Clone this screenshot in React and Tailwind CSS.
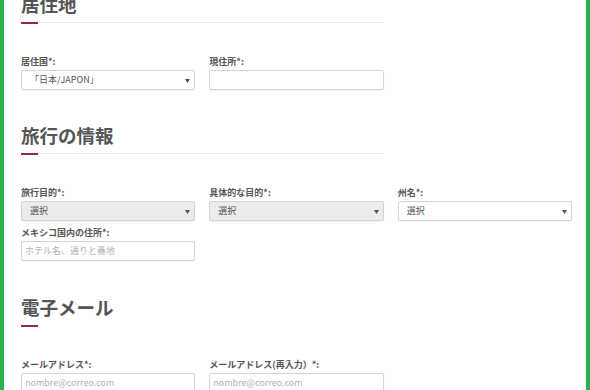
import React from "react";

const font = { fontFamily: '"Noto Sans CJK JP", "Noto Sans", sans-serif' };

function Arrow() {
  return (
    <svg width="5" height="4" viewBox="0 0 5 4" className="absolute right-[4px] top-[8px]">
      <path d="M0 0 L5 0 L2.5 4 Z" fill="#555" />
    </svg>
  );
}

function Label({ children }) {
  return (
    <div className="h-[12px] text-[9px] leading-[12px] font-bold text-[#555] mb-[2px] whitespace-nowrap">
      {children}
    </div>
  );
}

function Select({ value, disabled }) {
  return (
    <div
      className={
        "relative h-[20px] rounded-[2px] border border-[#d4d4d4] shadow-[0_1px_1px_rgba(0,0,0,0.05)] pl-[8px] text-[9px] leading-[18px] text-[#555] " +
        (disabled ? "bg-[#ececec]" : "bg-white")
      }
    >
      {value}
      <Arrow />
    </div>
  );
}

function Input({ placeholder }) {
  return (
    <div className="h-[20px] rounded-[2px] border border-[#d4d4d4] shadow-[0_1px_1px_rgba(0,0,0,0.05)] bg-white pl-[3px] text-[9px] leading-[18px] text-[#b0b0b0]">
      {placeholder}
    </div>
  );
}

function Heading({ title, rule = true }) {
  return (
    <div>
      <h2 className="h-[24px] text-[18.5px] leading-[24px] font-bold text-[#545454]">{title}</h2>
      <div className="relative mt-[6px] h-[2px] w-[363px]">
        {rule && <div className="h-px bg-[#e6e6e6]" />}
        <div className="absolute left-0 top-0 h-[2px] w-[17px] bg-[#9d2449]" />
      </div>
    </div>
  );
}

export default function App() {
  return (
    <div className="w-[590px] h-[390px] overflow-hidden bg-white flex" style={font}>
      <div className="w-[4px] bg-[#2bb24c]" />
      <div className="flex-1 pl-[17px] -mt-[8px]">
        {/* 居住地 */}
        <Heading title="居住地" />
        <div className="grid grid-cols-3 gap-x-[14px] w-[551px] mt-[32px]">
          <div>
            <Label>居住国*:</Label>
            <Select value="「日本/JAPON」" />
          </div>
          <div>
            <Label>現住所*:</Label>
            <Input placeholder="" />
          </div>
        </div>

        {/* 旅行の情報 */}
        <div className="mt-[33px]">
          <Heading title="旅行の情報" />
        </div>
        <div className="grid grid-cols-3 gap-x-[14px] gap-y-[6px] w-[551px] mt-[32px]">
          <div>
            <Label>旅行目的*:</Label>
            <Select value="選択" disabled />
          </div>
          <div>
            <Label>具体的な目的*:</Label>
            <Select value="選択" disabled />
          </div>
          <div>
            <Label>州名*:</Label>
            <Select value="選択" />
          </div>
          <div>
            <Label>メキシコ国内の住所*:</Label>
            <Input placeholder="ホテル名、通りと番地" />
          </div>
        </div>

        {/* 電子メール */}
        <div className="mt-[34px]">
          <Heading title="電子メール" rule={false} />
        </div>
        <div className="grid grid-cols-3 gap-x-[14px] w-[551px] mt-[32px]">
          <div>
            <Label>メールアドレス*:</Label>
            <Input placeholder="nombre@correo.com" />
          </div>
          <div>
            <Label>メールアドレス(再入力）*:</Label>
            <Input placeholder="nombre@correo.com" />
          </div>
        </div>
      </div>
      <div className="w-[4px] bg-[#2bb24c]" />
    </div>
  );
}
